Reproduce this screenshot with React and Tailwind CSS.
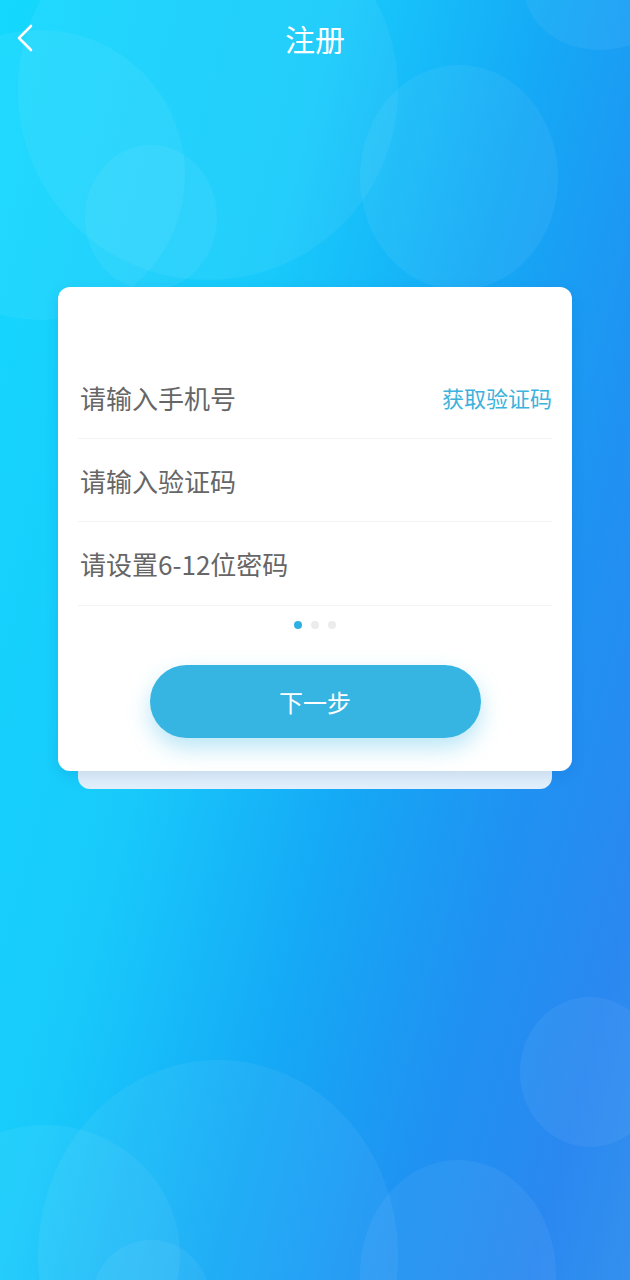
import React from "react";

const bubbles = [
  "left-[-105px] top-[30px] h-[290px] w-[290px]",
  "left-[18px] top-[-100px] h-[380px] w-[380px]",
  "left-[85px] top-[145px] h-[145px] w-[132px]",
  "left-[360px] top-[65px] h-[225px] w-[198px]",
  "left-[525px] top-[-70px] h-[120px] w-[150px]",
  "left-[520px] top-[997px] h-[150px] w-[140px]",
  "left-[38px] top-[1060px] h-[390px] w-[360px]",
  "left-[-90px] top-[1125px] h-[260px] w-[270px]",
  "left-[92px] top-[1240px] h-[120px] w-[118px]",
  "left-[360px] top-[1160px] h-[230px] w-[196px]",
];

export default function App() {
  return (
    <div className="relative h-[1280px] w-full overflow-hidden bg-[linear-gradient(105deg,#14d8fe_0%,#18cafb_35%,#15a9f6_57%,#1f92f2_75%,#2a88f0_90%,#3490ee_100%)] font-['Noto_Sans_CJK_SC','Noto_Sans',sans-serif]">
      {bubbles.map((c, i) => (
        <div key={i} className={`absolute rounded-[50%] bg-white/[0.05] ${c}`} />
      ))}

      <div className="relative">
        <div className="relative flex h-20 items-center justify-center pb-[4px]">
          <svg className="absolute left-[15px] top-[24px]" width="20" height="28" viewBox="0 0 20 28" fill="none">
            <polyline points="16,2 4,14 16,26" stroke="white" strokeWidth="2.6" strokeLinecap="round" strokeLinejoin="round" />
          </svg>
          <div className="text-[30px] leading-none text-white">注册</div>
        </div>

        <div className="mx-[58px] mt-[207px]">
          <div className="relative z-10 rounded-xl bg-white px-5 pb-[33px] pt-[69px] shadow-[0_4px_14px_rgba(0,60,140,0.12)]">
            <div className="flex h-[83px] items-center justify-between border-b border-[#f2f3f5] pl-[2px]">
              <span className="text-[26px] text-[#666]">请输入手机号</span>
              <span className="text-[22px] text-[#3cb2dc]">获取验证码</span>
            </div>
            <div className="flex h-[83px] items-center border-b border-[#f2f3f5] pl-[2px]">
              <span className="text-[26px] text-[#666]">请输入验证码</span>
            </div>
            <div className="flex h-[84px] items-center border-b border-[#f2f3f5] pl-[2px]">
              <span className="text-[26px] text-[#666]">请设置6-12位密码</span>
            </div>

            <div className="mt-[15px] flex justify-center gap-[9px]">
              <div className="h-2 w-2 rounded-full bg-[#2fb0e2]" />
              <div className="h-2 w-2 rounded-full bg-[#ececec]" />
              <div className="h-2 w-2 rounded-full bg-[#ececec]" />
            </div>

            <div className="mt-[36px] flex justify-center">
              <button className="flex h-[73px] w-[331px] items-center justify-center rounded-full bg-[#36b5e3] text-[24px] text-white shadow-[0_10px_22px_rgba(54,182,228,0.35)]">
                下一步
              </button>
            </div>
          </div>
          <div className="mx-5 -mt-3 h-[30px] rounded-b-xl bg-[#e0effb]" />
        </div>
      </div>
    </div>
  );
}
